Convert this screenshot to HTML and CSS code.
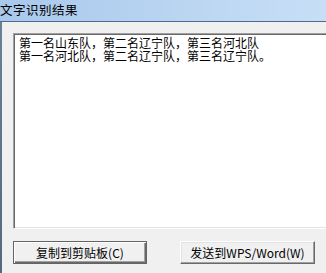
FILE: index.html
```html
<!DOCTYPE html>
<html>
<head>
<meta charset="utf-8">
<link rel="stylesheet" href="styles.css">
</head>
<body>
<div class="window">
  <div class="titlebar">文字识别结果</div>
  <div class="client">
    <div class="frame"></div>
    <div class="content">
      <div class="textbox">
        <div class="line">第一名山东队，第二名辽宁队，第三名河北队</div>
        <div class="line">第一名河北队，第二名辽宁队，第三名辽宁队。</div>
      </div>
      <div class="buttons">
        <div class="btn btn-default">复制到剪贴板(C)</div>
        <div class="btn">发送到WPS/Word(W)</div>
      </div>
    </div>
  </div>
</div>
</body>
</html>
```
FILE: styles.css
```css
html, body {
  margin: 0;
  padding: 0;
}
body {
  width: 326px;
  height: 273px;
  overflow: hidden;
  background: #f0f0f0;
  font-family: "Noto Sans CJK SC", "Noto Sans", sans-serif;
  font-size: 12px;
  color: #000;
}
.window {
  display: flex;
  flex-direction: column;
  height: 273px;
}
.titlebar {
  height: 21px;
  line-height: 19px;
  padding-left: 0;
  letter-spacing: 0.5px;
  font-size: 12.5px;
  background: linear-gradient(to right, #a8c8ec, #bcd6f2 60%, #c7def6);
  border-bottom: 1px solid #4e6b8e;
  color: #000;
}
.client {
  flex: 1;
  display: flex;
}
.frame {
  width: 2px;
  background: linear-gradient(to bottom, #6a7f99, #55687f);
}
.content {
  flex: 1;
  padding: 11px 0 0 11px;
  display: flex;
  flex-direction: column;
  overflow: hidden;
}
.textbox {
  width: 340px;
  height: 196px;
  box-sizing: border-box;
  background: #fff;
  border: 1px solid;
  border-color: #a0a0a0 #fff #fff #a0a0a0;
  box-shadow: inset 1px 1px #696969, inset -1px -1px #e3e3e3;
  padding: 2px 5px;
  line-height: 13px;
  white-space: nowrap;
}
.buttons {
  display: flex;
  gap: 33px;
  margin-top: 12px;
}
.btn {
  width: 135px;
  height: 23px;
  box-sizing: border-box;
  border: 1px solid;
  border-color: #fff #696969 #696969 #fff;
  box-shadow: inset -1px -1px #a0a0a0, inset 1px 1px #e3e3e3;
  background: #f0f0f0;
  display: flex;
  align-items: center;
  justify-content: center;
  line-height: 1;
  padding-top: 1px;
}
.btn-default {
  width: 134px;
  border: 1px solid #646464;
  box-shadow: inset 1px 1px #fff, inset -1px -1px #696969, inset -2px -2px #a0a0a0;
}
```
